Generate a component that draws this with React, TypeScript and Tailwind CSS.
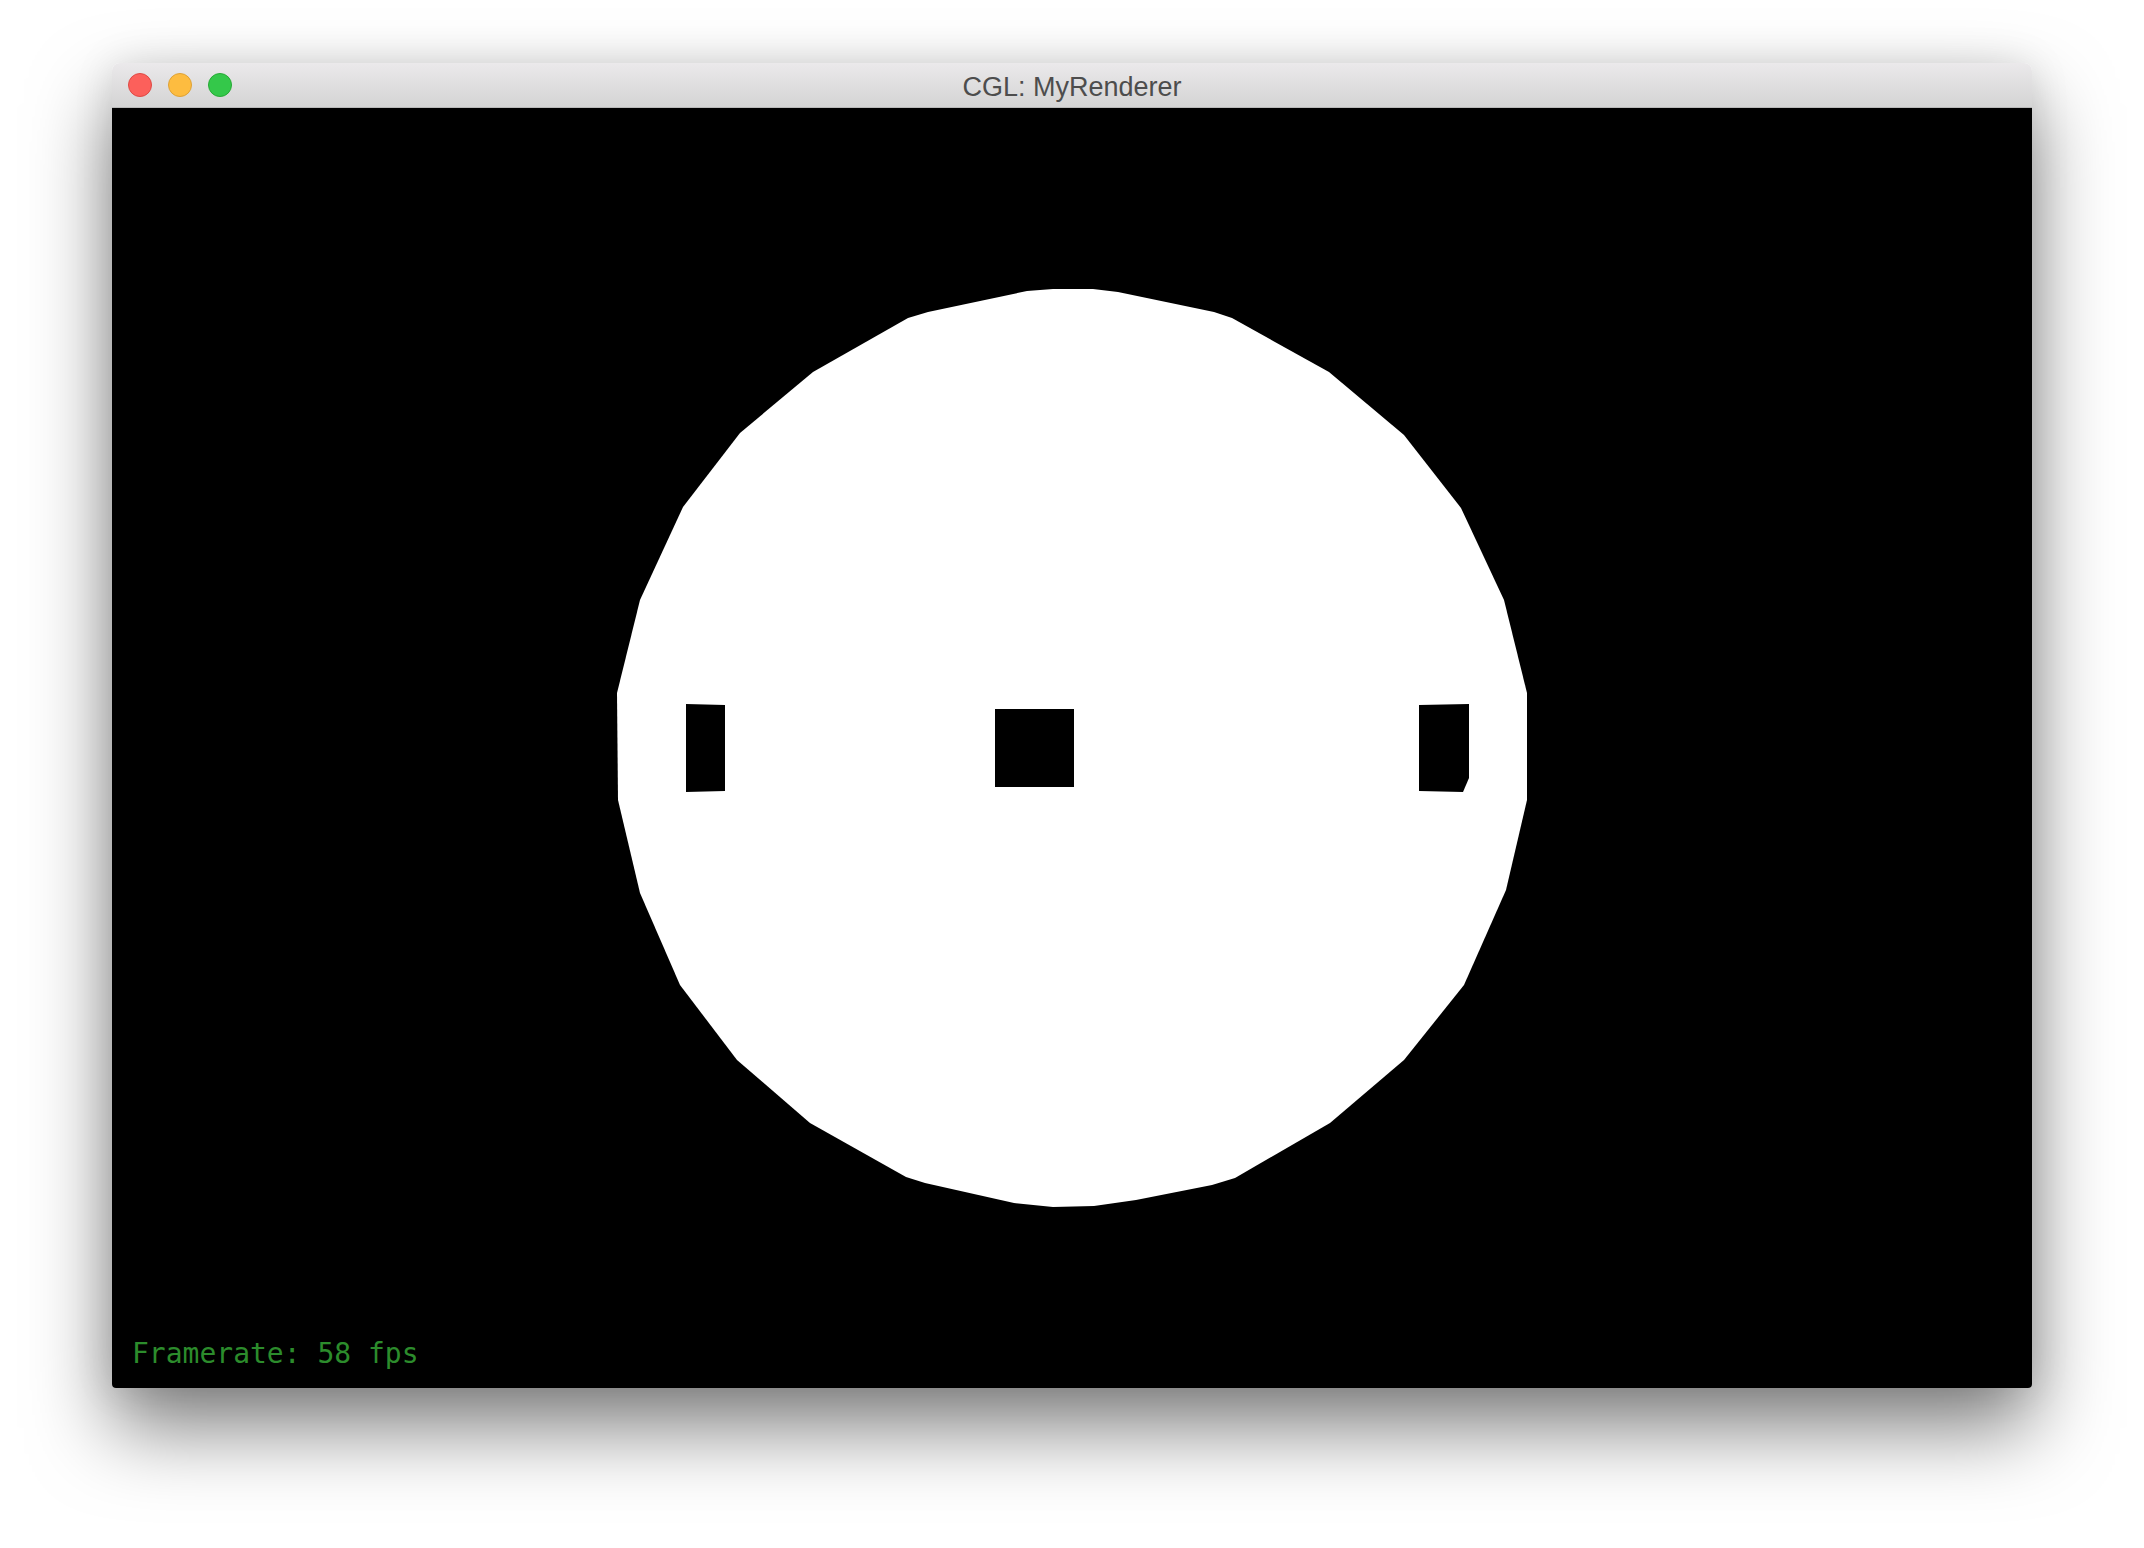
export default function App() {
    // polygon is in content-local coords (content box is 1920x1280)
    const circle =
        '941,181 981,181 1006,184 1102,204 1120,210 1217,264 1292,327 1349,400 1392,492 1415,585 1415,692 1394,782 1352,877 1292,952 1218,1015 1123,1070 1100,1077 1024,1092 982,1098 941,1099 902,1095 813,1075 794,1069 698,1015 625,952 568,877 528,785 506,692 505,585 528,492 571,399 628,325 701,264 796,210 816,204 915,183'

    return (
        <div className="w-[2144px] h-[1548px] bg-white pt-[63px] pl-[112px] overflow-hidden">
            <div className="w-[1920px] rounded-t-[8px] rounded-b-[4px] overflow-hidden shadow-[0_40px_80px_rgba(0,0,0,0.5),0_0_40px_rgba(0,0,0,0.1)]">
                {/* title bar */}
                <div className="relative h-[45px] flex items-center justify-center border-b border-[#b9b9b9] bg-gradient-to-b from-[#ebe9eb] to-[#d4d4d4]">
                    <div className="absolute left-[16px] top-[10px] flex gap-[16px]">
                        <span className="w-[24px] h-[24px] rounded-full bg-[#fc605b] border border-[#de4a45]" />
                        <span className="w-[24px] h-[24px] rounded-full bg-[#fdbc40] border border-[#dea236]" />
                        <span className="w-[24px] h-[24px] rounded-full bg-[#34c84a] border border-[#27aa35]" />
                    </div>
                    <span className="text-[27px] text-[#4d4d4d] leading-none mt-[4px]" style={{ fontFamily: '"Liberation Sans", Arial, sans-serif' }}>
                        CGL: MyRenderer
                    </span>
                </div>

                {/* GL view */}
                <div className="relative h-[1280px] bg-black flex flex-col justify-end">
                    <svg className="absolute inset-0" width={1920} height={1280} viewBox="0 0 1920 1280">
                        <polygon points={circle} fill="#fff" />
                        <polygon points="574,596 613,597 613,683 574,684" fill="#000" />
                        <rect x={883} y={601} width={79} height={78} fill="#000" />
                        <polygon points="1307,597 1357,596 1357,670 1351,684 1307,683" fill="#000" />
                    </svg>
                    <p className="relative pl-[20px] pb-[14px] text-[28px] leading-[40px] text-[#2c8c2c]" style={{ fontFamily: '"DejaVu Sans Mono", "Liberation Mono", monospace' }}>
                        Framerate: 58 fps
                    </p>
                </div>
            </div>
        </div>
    )
}
